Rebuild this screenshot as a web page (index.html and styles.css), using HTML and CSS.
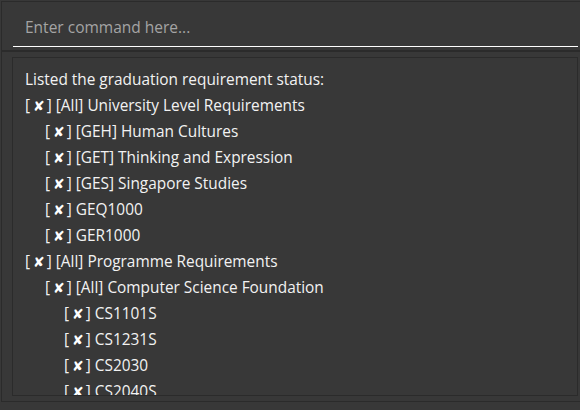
FILE: index.html
```html
<!DOCTYPE html>
<html>
<head>
<meta charset="utf-8">
<link rel="stylesheet" href="styles.css">
</head>
<body>
<div class="app">
  <div class="command-pane">
    <div class="command-field">Enter command here...</div>
  </div>
  <div class="result-pane">
    <div class="result-box">
      <div class="line">Listed the graduation requirement status:</div>
      <div class="line l0"><span class="br">[</span><span class="x">✘</span><span class="br">]</span> [All] University Level Requirements</div>
      <div class="line l1"><span class="br">[</span><span class="x">✘</span><span class="br">]</span> [GEH] Human Cultures</div>
      <div class="line l1"><span class="br">[</span><span class="x">✘</span><span class="br">]</span> [GET] Thinking and Expression</div>
      <div class="line l1"><span class="br">[</span><span class="x">✘</span><span class="br">]</span> [GES] Singapore Studies</div>
      <div class="line l1"><span class="br">[</span><span class="x">✘</span><span class="br">]</span> GEQ1000</div>
      <div class="line l1"><span class="br">[</span><span class="x">✘</span><span class="br">]</span> GER1000</div>
      <div class="line l0"><span class="br">[</span><span class="x">✘</span><span class="br">]</span> [All] Programme Requirements</div>
      <div class="line l1"><span class="br">[</span><span class="x">✘</span><span class="br">]</span> [All] Computer Science Foundation</div>
      <div class="line l2"><span class="br">[</span><span class="x">✘</span><span class="br">]</span> CS1101S</div>
      <div class="line l2"><span class="br">[</span><span class="x">✘</span><span class="br">]</span> CS1231S</div>
      <div class="line l2"><span class="br">[</span><span class="x">✘</span><span class="br">]</span> CS2030</div>
      <div class="line l2"><span class="br">[</span><span class="x">✘</span><span class="br">]</span> CS2040S</div>
    </div>
  </div>
</div>
</body>
</html>
```
FILE: styles.css
```css
html, body {
  margin: 0;
  padding: 0;
  background: #383838;
  width: 580px;
  height: 410px;
  overflow: hidden;
}
.app {
  width: 580px;
  height: 410px;
  box-sizing: border-box;
  padding: 1px 0 0 1px;
  display: flex;
  flex-direction: column;
  font-family: "Open Sans", "Noto Sans", sans-serif;
}
.command-pane {
  height: 51px;
  box-sizing: border-box;
  border-top: 1px solid #2b2b2b;
  border-left: 1px solid #2b2b2b;
  border-bottom: 2px solid #2b2b2b;
  padding: 0 2px 0 11px;
}
.command-field {
  height: 45px;
  box-sizing: border-box;
  border-bottom: 1px solid #ffffff;
  padding: 15px 0 0 12px;
  color: #a4a4a4;
  font-size: 15.5px;
  line-height: 20px;
}
.result-pane {
  height: 350px;
  box-sizing: border-box;
  border-left: 1px solid #2b2b2b;
  border-bottom: 1px solid #2b2b2b;
  padding: 5px 2px 5px 10px;
}
.result-box {
  height: 339px;
  box-sizing: border-box;
  border: 1px solid #2b2b2b;
  padding: 9px 0 0 12px;
  overflow: hidden;
  color: #f2f2f2;
  font-size: 15.4px;
  line-height: 26px;
}
.line {
  white-space: nowrap;
  height: 26px;
}
.l1 { padding-left: 20px; }
.l2 { padding-left: 39px; }
.br { color: #f2f2f2; }
.x {
  font-family: "DejaVu Sans", sans-serif;
  font-weight: bold;
  display: inline-block;
  line-height: 20px;
  vertical-align: top;
  padding-top: 3px;
  margin: 0 2px 0 3px;
  font-size: 14px;
  color: #ffffff;
}
```
